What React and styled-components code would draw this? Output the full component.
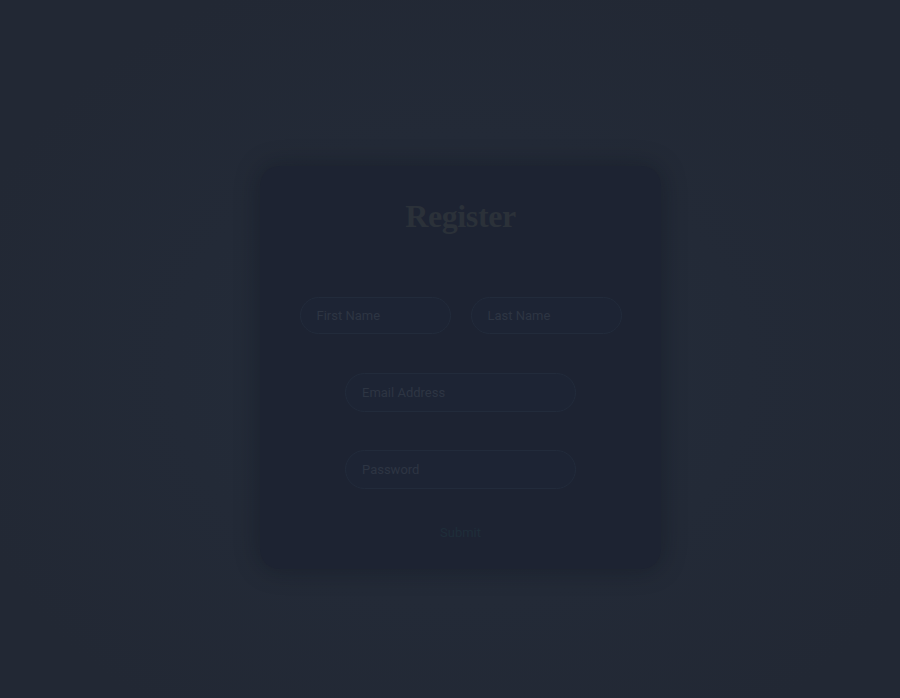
import React from 'react';
import styled, { createGlobalStyle } from 'styled-components';

const GlobalStyle = createGlobalStyle`
  html, body {
    margin: 0;
    padding: 0;
    background: #222834;
  }
  * {
    box-sizing: border-box;
  }
`;

const Page = styled.div`
  width: 900px;
  height: 698px;
  padding: 166px 0 0 260px;
  overflow: hidden;
  background: radial-gradient(
    ellipse 520px 420px at 460px 370px,
    #242d3b 0%,
    #232a37 55%,
    #222834 100%
  );
`;

const Card = styled.form`
  width: 401px;
  height: 403px;
  padding: 32px 40px 28px;
  border-radius: 20px;
  background: #1d2332;
  box-shadow: 0 0 24px rgba(10, 14, 22, 0.35);
  display: flex;
  flex-direction: column;
  align-items: center;
`;

const Title = styled.h1`
  margin: 0 0 62px;
  font-family: 'Liberation Serif', 'Times New Roman', serif;
  font-size: 32px;
  font-weight: 700;
  line-height: 37px;
  letter-spacing: -0.4px;
  color: #2b3139;
`;

const NameRow = styled.div`
  display: flex;
  gap: 20px;
  margin-bottom: 39px;
`;

const Field = styled.input`
  width: ${(p) => (p.$wide ? '231px' : '151px')};
  height: ${(p) => (p.$wide ? '39px' : '37px')};
  margin-bottom: ${(p) => p.$gap || 0}px;
  padding: 0 16px;
  border: 1px solid #222b3b;
  border-radius: 20px;
  background: #1d2434;
  font-family: Roboto, 'Liberation Sans', Arial, sans-serif;
  font-size: 13px;
  color: #2d3543;
  outline: none;

  &::placeholder {
    color: #2d3543;
  }
`;

const Submit = styled.button`
  margin-top: 36px;
  padding: 0;
  border: none;
  background: transparent;
  font-family: Roboto, 'Liberation Sans', Arial, sans-serif;
  font-size: 13px;
  line-height: 15px;
  color: #1f2e3a;
  cursor: pointer;
`;

export default function App() {
  return (
    <>
      <GlobalStyle />
      <Page>
        <Card onSubmit={(e) => e.preventDefault()}>
          <Title>Register</Title>
          <NameRow>
            <Field placeholder="First Name" />
            <Field placeholder="Last Name" />
          </NameRow>
          <Field $wide $gap={38} type="email" placeholder="Email Address" />
          <Field $wide type="password" placeholder="Password" />
          <Submit type="submit">Submit</Submit>
        </Card>
      </Page>
    </>
  );
}
